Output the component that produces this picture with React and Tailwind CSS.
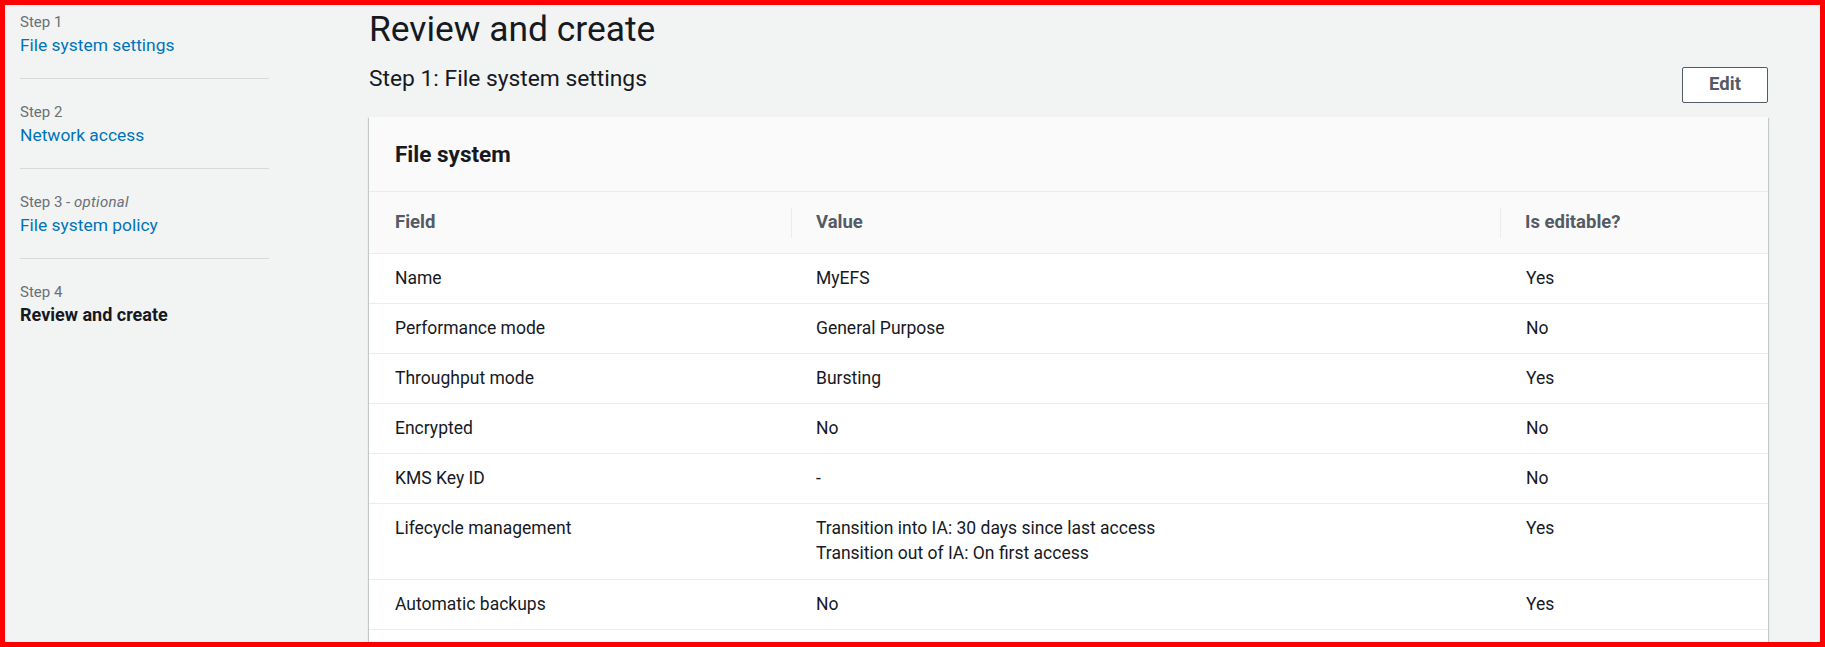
import React from 'react';

const steps = [
  { label: 'Step 1', title: 'File system settings' },
  { label: 'Step 2', title: 'Network access' },
  { label: 'Step 3', optional: true, title: 'File system policy' },
  { label: 'Step 4', title: 'Review and create', current: true },
];

const rows = [
  { field: 'Name', value: ['MyEFS'], editable: 'Yes' },
  { field: 'Performance mode', value: ['General Purpose'], editable: 'No' },
  { field: 'Throughput mode', value: ['Bursting'], editable: 'Yes' },
  { field: 'Encrypted', value: ['No'], editable: 'No' },
  { field: 'KMS Key ID', value: ['-'], editable: 'No' },
  {
    field: 'Lifecycle management',
    value: ['Transition into IA: 30 days since last access', 'Transition out of IA: On first access'],
    editable: 'Yes',
  },
  { field: 'Automatic backups', value: ['No'], editable: 'Yes' },
];

function Sidebar() {
  return (
    <nav className="w-[364px] shrink-0 pl-[15px]">
      <ul className="w-[249px]">
        {steps.map((s, i) => (
          <li
            key={s.label}
            className={`${i === 0 ? 'pt-[7px]' : 'pt-[23px]'} pb-[21px] ${i < steps.length - 1 ? 'border-b border-[#d5dbdb]' : ''}`}
          >
            <div className="text-[15px] leading-[20px] text-[#687078]">
              {s.label}
              {s.optional && (
                <>
                  {' - '}
                  <i className="tracking-[0.3px]">optional</i>
                </>
              )}
            </div>
            {s.current ? (
              <div className="mt-px text-[18px] leading-[24px] font-bold text-[#16191f]">{s.title}</div>
            ) : (
              <a className="mt-px block text-[17.4px] leading-[24px] text-[#0073bb]">{s.title}</a>
            )}
          </li>
        ))}
      </ul>
    </nav>
  );
}

function HeaderCell({ children, sep }) {
  return (
    <div className="flex items-center">
      {sep && <div className="w-px h-[30px] bg-[#eaeded]" />}
      <span className={sep ? 'ml-[24px]' : 'ml-[26px]'}>{children}</span>
    </div>
  );
}

export default function App() {
  return (
    <div
      className="h-[647px] overflow-hidden border-[5px] border-[#ff0000] bg-[#f2f3f3] text-[#16191f] flex"
      style={{ fontFamily: 'Roboto, "Liberation Sans", sans-serif' }}
    >
      <Sidebar />

      <main className="flex-1 pr-[52px]">
        <h1 className="mt-[4px] text-[35.4px] leading-[40px] font-normal">Review and create</h1>

        <div className="mt-[15px] flex justify-between items-start">
          <h2 className="text-[22.8px] leading-[30px] font-normal">Step 1: File system settings</h2>
          <button className="mt-[3px] w-[86px] h-[36px] rounded-[2px] border border-[#545b64] bg-white text-[18.5px] font-bold text-[#545b64]">
            Edit
          </button>
        </div>

        <section className="mt-[14px] bg-white shadow-[0_1px_1px_0_rgba(0,28,36,0.3),1px_1px_1px_0_rgba(0,28,36,0.15),-1px_1px_1px_0_rgba(0,28,36,0.15)]">
          <div className="bg-[#fafafa] px-[26px] py-[23px] border-b border-[#eaeded]">
            <h3 className="text-[22.5px] leading-[28px] font-bold">File system</h3>
          </div>

          <div className="grid grid-cols-[422px_709px_1fr] text-[17.5px] leading-[25px]">
            <div className="col-span-3 grid grid-cols-subgrid h-[62px] bg-[#fafafa] border-b border-[#eaeded] text-[18.5px] font-bold text-[#545b64]">
              <HeaderCell>Field</HeaderCell>
              <HeaderCell sep>Value</HeaderCell>
              <HeaderCell sep>Is editable?</HeaderCell>
            </div>

            {rows.map((r) => (
              <div
                key={r.field}
                className={`col-span-3 grid grid-cols-subgrid pt-[12px] ${r.value.length > 1 ? 'pb-[13px]' : 'pb-[12px]'} border-b border-[#eaeded]`}
              >
                <div className="pl-[26px]">{r.field}</div>
                <div className="pl-[25px]">
                  {r.value.map((v) => (
                    <div key={v}>{v}</div>
                  ))}
                </div>
                <div className="pl-[26px]">{r.editable}</div>
              </div>
            ))}

            {/* next row continues below the fold */}
            <div className="col-span-3 h-[49px]" />
          </div>
        </section>
      </main>
    </div>
  );
}
